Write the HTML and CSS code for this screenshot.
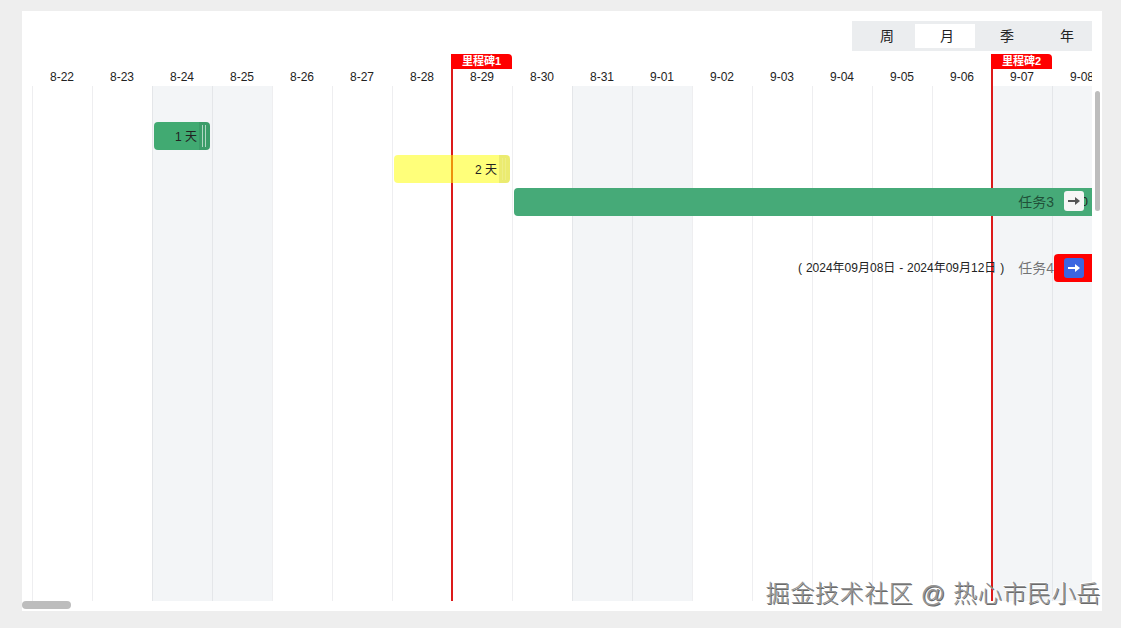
FILE: index.html
```html
<!DOCTYPE html>
<html lang="en">
<head>
    <meta charset="UTF-8">
    <meta name="viewport" content="width=device-width, initial-scale=1.0">
    <title>Gantt</title>
    <link rel="stylesheet" href="styles.css">
</head>
<body>

    <div class="panel">
        <div class="toolbar">
            <div class="scale-switch">
                <span class="scale-item">周</span>
                <span class="scale-item active">月</span>
                <span class="scale-item">季</span>
                <span class="scale-item">年</span>
            </div>
        </div>

        <div class="gantt">
            <div class="dates">
                <span class="date">8-22</span>
                <span class="date">8-23</span>
                <span class="date">8-24</span>
                <span class="date">8-25</span>
                <span class="date">8-26</span>
                <span class="date">8-27</span>
                <span class="date">8-28</span>
                <span class="date">8-29</span>
                <span class="date">8-30</span>
                <span class="date">8-31</span>
                <span class="date">9-01</span>
                <span class="date">9-02</span>
                <span class="date">9-03</span>
                <span class="date">9-04</span>
                <span class="date">9-05</span>
                <span class="date">9-06</span>
                <span class="date">9-07</span>
                <span class="date">9-08</span>
            </div>

            <div class="grid">
                <div class="day"></div>
                <div class="day"></div>
                <div class="day weekend"></div>
                <div class="day weekend"></div>
                <div class="day"></div>
                <div class="day"></div>
                <div class="day"></div>
                <div class="day"></div>
                <div class="day"></div>
                <div class="day weekend"></div>
                <div class="day weekend"></div>
                <div class="day"></div>
                <div class="day"></div>
                <div class="day"></div>
                <div class="day"></div>
                <div class="day"></div>
                <div class="day weekend"></div>
                <div class="day weekend"></div>
            </div>

            <!-- milestones -->
            <div class="milestone milestone-1"><span class="milestone-tag">里程碑1</span></div>
            <div class="milestone milestone-2"><span class="milestone-tag">里程碑2</span></div>

            <!-- task bars -->
            <div class="bar bar-green task-1">
                <span class="bar-days">1 天</span>
                <span class="handle"></span>
            </div>
            <div class="bar bar-yellow task-2">
                <span class="bar-days">2 天</span>
                <span class="handle"></span>
            </div>
            <div class="bar bar-solid task-3">
                <span class="task-name">任务3</span>
                <span class="hidden-date">0</span>
                <span class="jump">
                    <svg width="12" height="10" viewBox="0 0 12 10"><path d="M0 5H8" stroke="#555" stroke-width="2"/><path d="M7 1L12 5L7 9Z" fill="#555"/></svg>
                </span>
            </div>
            <div class="task-outside">
                <span class="task-date">( 2024年09月08日 - 2024年09月12日 )</span>
                <span class="task-name">任务4</span>
                <span class="red-block">
                    <span class="jump jump-blue">
                        <svg width="12" height="10" viewBox="0 0 12 10"><path d="M0 5H8" stroke="#fff" stroke-width="2"/><path d="M7 1L12 5L7 9Z" fill="#fff"/></svg>
                    </span>
                </span>
            </div>
        </div>

        <div class="scroll-v"></div>
        <div class="scroll-h"></div>
    </div>

    <div class="watermark">掘金技术社区 @ 热心市民小岳</div>

</body>
</html>
```

FILE: styles.css
```css
body {
    font-family: "Liberation Sans", "Noto Sans CJK SC", sans-serif;
    margin: 0;
    padding: 11px 0 0 22px;
    background-color: #eeeeee;
    color: #222;
    font-size: 12px;
    overflow: hidden;
}
.panel {
    position: relative;
    width: 1080px;
    height: 600px;
    background: #fff;
}
.toolbar {
    display: flex;
    justify-content: flex-end;
    padding: 10px 10px 0 0;
}
.scale-switch {
    display: flex;
    width: 240px;
    height: 30px;
    padding: 3px 0 3px 3px;
    box-sizing: border-box;
    background: #ebedef;
    overflow: hidden;
}
.scale-item {
    flex: none;
    width: 60px;
    padding-left: 4px;
    box-sizing: border-box;
    text-align: center;
    font-size: 14px;
    line-height: 24px;
    color: #222;
}
.scale-item.active {
    background: #fff;
}
.gantt {
    position: relative;
    width: 1070px;
    height: 547px;
    margin-top: 3px;
    overflow: hidden;
}
.dates {
    display: flex;
    padding: 15px 0 0 10px;
    height: 17px;
}
.date {
    flex: none;
    width: 60px;
    text-align: center;
    font-size: 12px;
    line-height: 16px;
    color: #222;
}
.grid {
    display: flex;
    height: 515px;
    padding-left: 10px;
}
.day {
    flex: none;
    width: 60px;
    box-sizing: border-box;
    border-left: 1px solid #eeeef0;
}
.weekend {
    background: #f3f5f7;
    border-left-color: #e4e6e9;
}
.milestone {
    position: absolute;
    top: 0;
    bottom: 0;
    width: 2px;
    background: #dc1a1a;
}
.milestone-1 {
    left: 429px;
}
.milestone-2 {
    left: 969px;
}
.milestone-tag {
    position: absolute;
    left: 0;
    top: 0;
    width: 61px;
    height: 15px;
    background: #ff0000;
    border-radius: 0 4px 0 0;
    color: #fff;
    font-size: 11px;
    font-weight: bold;
    line-height: 15px;
    text-align: center;
}
.bar {
    position: absolute;
    height: 28px;
    display: flex;
    align-items: center;
    justify-content: flex-end;
    border-radius: 4px;
    line-height: 28px;
}
.bar-green {
    background: #41aa72;
}
.bar-yellow {
    background: rgba(255, 255, 0, 0.52);
}
.bar-solid {
    background: #46aa78;
    border-radius: 4px 0 0 4px;
}
.task-1 {
    left: 132px;
    top: 68px;
    width: 56px;
}
.task-2 {
    left: 372px;
    top: 101px;
    width: 116px;
}
.task-3 {
    left: 492px;
    top: 134px;
    width: 578px;
}
.bar-days {
    margin-right: 13px;
    padding-top: 2px;
    color: #222;
}
.handle {
    position: absolute;
    right: 0;
    top: 0;
    bottom: 0;
    width: 11px;
    border-radius: 0 4px 4px 0;
    background: rgba(0, 0, 0, 0.08);
}
.handle::before {
    content: "";
    position: absolute;
    left: 3px;
    top: 3px;
    bottom: 3px;
    width: 2px;
    border-left: 1px solid rgba(255, 255, 255, 0.6);
    border-right: 1px solid rgba(255, 255, 255, 0.6);
}
.bar-yellow .handle::before {
    border-color: rgba(255, 255, 255, 0.15);
}
.task-name {
    font-size: 14px;
    line-height: 28px;
    color: rgba(0, 0, 0, 0.55);
}
.task-3 .task-name {
    margin-right: 38px;
}
.hidden-date {
    position: absolute;
    right: 4px;
    top: 0;
    color: #222;
    font-size: 12px;
}
.jump {
    position: absolute;
    right: 8px;
    top: 3px;
    width: 20px;
    height: 20px;
    display: flex;
    align-items: center;
    justify-content: center;
    background: #f6f6f6;
    border-radius: 3px;
}
.jump-blue {
    background: #3b65e0;
    top: 4px;
}
.task-outside {
    position: absolute;
    right: 0;
    top: 200px;
    height: 28px;
    display: flex;
    align-items: center;
}
.task-date {
    margin-right: 14px;
    padding-bottom: 3px;
    color: #222;
    font-size: 12px;
    word-spacing: 0.5px;
}
.red-block {
    position: relative;
    width: 38px;
    height: 28px;
    background: #ff0000;
    border-radius: 4px 0 0 4px;
}
.scroll-v {
    position: absolute;
    left: 1073px;
    top: 80px;
    width: 5px;
    height: 120px;
    background: #bdbdbd;
    border-radius: 3px;
}
.scroll-h {
    position: absolute;
    left: 0;
    top: 590px;
    width: 49px;
    height: 8px;
    background: #bdbdbd;
    border-radius: 4px;
}
.watermark {
    position: absolute;
    right: 20px;
    top: 580px;
    font-size: 24px;
    font-weight: 300;
    letter-spacing: 0.65px;
    line-height: 28px;
    color: #949494;
    text-shadow: 1px 1px 0 #6a6a6a, -1px -1px 0 #fff;
    white-space: nowrap;
}
```
